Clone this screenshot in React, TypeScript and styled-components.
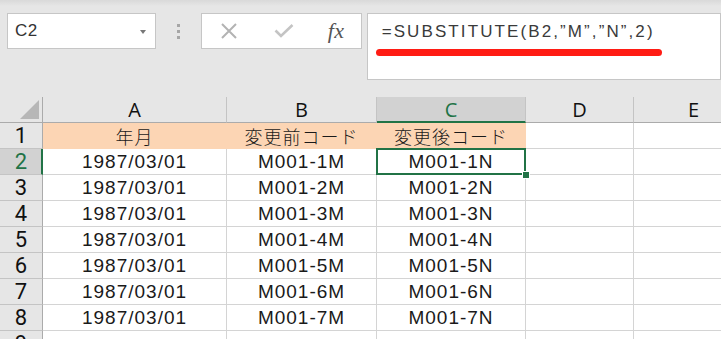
import React from 'react';
import styled, { createGlobalStyle } from 'styled-components';

const GlobalStyle = createGlobalStyle`
  html, body {
    margin: 0;
    padding: 0;
    background: #e6e6e6;
  }
  body {
    width: 721px;
    height: 339px;
    overflow: hidden;
  }
`;

const GREEN = '#217346';
const GRID = '#d4d4d4';

const Page = styled.div`
  width: 721px;
  height: 339px;
  overflow: hidden;
  background: #e6e6e6;
  font-family: 'Liberation Sans', 'Noto Sans CJK JP', sans-serif;
`;

const Toolbar = styled.div`
  display: flex;
  align-items: flex-start;
  height: 97px;
  padding: 13px 0 0 7px;
  box-sizing: border-box;
  background: linear-gradient(#d9d9d9 0px, #e6e6e6 6px);
`;

const NameBox = styled.div`
  display: flex;
  align-items: center;
  justify-content: space-between;
  width: 151px;
  height: 36px;
  box-sizing: border-box;
  padding: 0 9px 0 7px;
  background: #fff;
  border: 1px solid #c6c6c6;
  color: #333;
  font-size: 17px;
  letter-spacing: 0.5px;
`;

const Caret = styled.span`
  width: 0;
  height: 0;
  border-left: 3.5px solid transparent;
  border-right: 3.5px solid transparent;
  border-top: 4px solid #777;
  margin-top: 1px;
`;

const Grip = styled.div`
  display: flex;
  flex-direction: column;
  align-items: center;
  justify-content: center;
  gap: 3px;
  width: 46px;
  height: 36px;

  span {
    width: 3px;
    height: 3px;
    background: #a6a6a6;
  }
`;

const FuncBox = styled.div`
  display: flex;
  align-items: center;
  width: 163px;
  height: 36px;
  box-sizing: border-box;
  padding: 0 0 0 12px;
  background: #fff;
  border: 1px solid #c6c6c6;
`;

const FuncSlot = styled.div<{ $w: number }>`
  display: flex;
  align-items: center;
  justify-content: center;
  width: ${(p) => p.$w}px;
  height: 100%;
`;

const Fx = styled.span`
  font-family: 'Liberation Serif', 'DejaVu Serif', serif;
  font-style: italic;
  font-size: 22px;
  color: #555;
  letter-spacing: 0.5px;
`;

const FormulaBox = styled.div`
  display: flex;
  flex-direction: column;
  margin-left: 5px;
  width: 360px;
  height: 67px;
  box-sizing: border-box;
  padding: 7px 0 0 14px;
  background: #fff;
  border: 1px solid #c6c6c6;
`;

const FormulaText = styled.div`
  font-size: 17px;
  letter-spacing: 2.1px;
  color: #3a3a3a;
  line-height: 22px;
  white-space: nowrap;
`;

const Underline = styled.div`
  width: 286px;
  height: 7px;
  margin: 6px 0 0 -6px;
  border-radius: 4px;
  background: #ff1c14;
`;

const Grid = styled.div`
  display: grid;
  grid-template-columns: 43px 184px 150px 149px 108px 120px;
  grid-auto-rows: 26px;
`;

const Corner = styled.div`
  position: relative;
  background: #e6e6e6;
  border-right: 1px solid #ababab;
  border-bottom: 1px solid #ababab;

  &::after {
    content: '';
    position: absolute;
    right: 3px;
    bottom: 3px;
    width: 0;
    height: 0;
    border-left: 19px solid transparent;
    border-bottom: 19px solid #b7b7b7;
  }
`;

const ColHead = styled.div<{ $active?: boolean }>`
  display: flex;
  align-items: center;
  justify-content: center;
  box-sizing: border-box;
  background: ${(p) => (p.$active ? '#d2d2d2' : '#e6e6e6')};
  border-right: 1px solid #c4c4c4;
  border-bottom: ${(p) => (p.$active ? `2px solid ${GREEN}` : '1px solid #ababab')};
  color: ${(p) => (p.$active ? GREEN : '#111')};
  font-family: 'Open Sans', 'Liberation Sans', sans-serif;
  font-size: 20px;
  padding-top: ${(p) => (p.$active ? '1px' : '0')};
`;

const RowHead = styled.div<{ $active?: boolean }>`
  display: flex;
  align-items: center;
  justify-content: center;
  box-sizing: border-box;
  background: ${(p) => (p.$active ? '#d2d2d2' : '#e6e6e6')};
  border-right: ${(p) => (p.$active ? `2px solid ${GREEN}` : '1px solid #ababab')};
  border-bottom: 1px solid #c4c4c4;
  color: ${(p) => (p.$active ? GREEN : '#111')};
  font-family: 'Roboto', 'Liberation Sans', sans-serif;
  font-size: 22px;
  padding-left: ${(p) => (p.$active ? '1px' : '0')};
`;

const Cell = styled.div<{ $fill?: boolean; $cjk?: boolean }>`
  display: flex;
  align-items: center;
  justify-content: center;
  box-sizing: border-box;
  background: ${(p) => (p.$fill ? '#fcd5b4' : '#fff')};
  border-right: 1px solid ${(p) => (p.$fill ? '#fcd5b4' : GRID)};
  border-bottom: 1px solid ${(p) => (p.$fill ? '#fcd5b4' : GRID)};
  color: #1a1a1a;
  font-family: ${(p) =>
    p.$cjk
      ? "'Noto Sans CJK JP', sans-serif"
      : "'Liberation Sans', 'Noto Sans CJK JP', sans-serif"};
  font-weight: ${(p) => (p.$cjk ? 300 : 400)};
  font-size: ${(p) => (p.$cjk ? '18px' : '19px')};
  letter-spacing: 1px;
  white-space: nowrap;
  padding-top: 1px;
`;

const SelectedCell = styled(Cell)`
  position: relative;

  &::before {
    content: '';
    position: absolute;
    left: -1px;
    top: -1px;
    right: -1px;
    bottom: -1px;
    border: 2px solid ${GREEN};
  }

  &::after {
    content: '';
    position: absolute;
    right: -4px;
    bottom: -4px;
    width: 6px;
    height: 6px;
    background: ${GREEN};
    box-shadow: 0 0 0 1px #fff;
  }
`;

const cols = ['A', 'B', 'C', 'D', 'E'];
const rows = [1, 2, 3, 4, 5, 6, 7].map((n) => ({
  date: '1987/03/01',
  before: `M001-${n}M`,
  after: `M001-${n}N`,
}));

const CloseIcon = () => (
  <svg width="18" height="16" viewBox="0 0 18 16">
    <path d="M2 1 L16 15 M16 1 L2 15" stroke="#b3b3b3" strokeWidth="2" fill="none" />
  </svg>
);

const CheckIcon = () => (
  <svg width="20" height="14" viewBox="0 0 20 14">
    <path d="M1.5 6.5 L7 12 L18.5 1" stroke="#c4c4c4" strokeWidth="2.6" fill="none" />
  </svg>
);

export default function App() {
  return (
    <Page>
      <GlobalStyle />
      <Toolbar>
        <NameBox>
          <span>C2</span>
          <Caret />
        </NameBox>
        <Grip>
          <span />
          <span />
          <span />
        </Grip>
        <FuncBox>
          <FuncSlot $w={29}>
            <CloseIcon />
          </FuncSlot>
          <FuncSlot $w={82}>
            <CheckIcon />
          </FuncSlot>
          <FuncSlot $w={22}>
            <Fx>fx</Fx>
          </FuncSlot>
        </FuncBox>
        <FormulaBox>
          <FormulaText>=SUBSTITUTE(B2,”M”,”N”,2)</FormulaText>
          <Underline />
        </FormulaBox>
      </Toolbar>

      <Grid>
        <Corner />
        {cols.map((c) => (
          <ColHead key={c} $active={c === 'C'}>
            {c}
          </ColHead>
        ))}

        <RowHead>1</RowHead>
        <Cell $fill $cjk>年月</Cell>
        <Cell $fill $cjk>変更前コード</Cell>
        <Cell $fill $cjk>変更後コード</Cell>
        <Cell />
        <Cell />

        {rows.map((r, i) => (
          <React.Fragment key={i}>
            <RowHead $active={i === 0}>{i + 2}</RowHead>
            <Cell>{r.date}</Cell>
            <Cell>{r.before}</Cell>
            {i === 0 ? <SelectedCell>{r.after}</SelectedCell> : <Cell>{r.after}</Cell>}
            <Cell />
            <Cell />
          </React.Fragment>
        ))}

        <RowHead>9</RowHead>
        <Cell />
        <Cell />
        <Cell />
        <Cell />
        <Cell />
      </Grid>
    </Page>
  );
}
